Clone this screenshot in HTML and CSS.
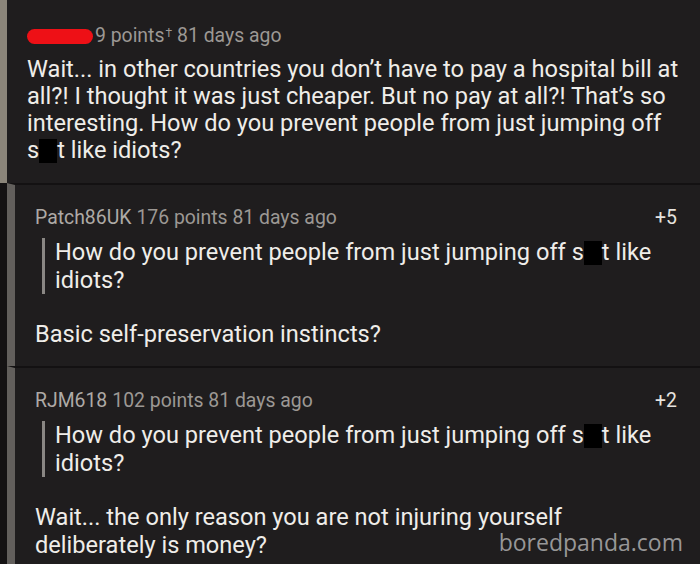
FILE: index.html
```html
<!DOCTYPE html>
<html lang="en">
<head>
  <meta charset="UTF-8" />
  <meta name="viewport" content="width=device-width, initial-scale=1.0" />
  <title>Comments</title>
  <link rel="stylesheet" href="styles.css">
</head>
<body>
  <div class="thread">
    <div class="comment top">
      <div class="meta"><span class="scribble"></span> 9 points<sup>†</sup> 81 days ago</div>
      <p class="body">Wait... in other countries you don’t have to pay a hospital bill at all?! I thought it was just cheaper. But no pay at all?! That’s so interesting. How do you prevent people from just jumping off <span class="word">s<span class="censor"></span>t</span> like idiots?</p>
    </div>

    <div class="replies">
      <div class="comment reply">
        <div class="meta"><span class="user">Patch86UK</span> 176 points 81 days ago <span class="score">+5</span></div>
        <blockquote>How do you prevent people from just jumping off <span class="word">s<span class="censor"></span>t</span> like idiots?</blockquote>
        <p class="body">Basic self-preservation instincts?</p>
      </div>

      <div class="comment reply">
        <div class="meta"><span class="user">RJM618</span> 102 points 81 days ago <span class="score">+2</span></div>
        <blockquote>How do you prevent people from just jumping off <span class="word">s<span class="censor"></span>t</span> like idiots?</blockquote>
        <p class="body">Wait... the only reason you are not injuring yourself deliberately is money?</p>
      </div>
    </div>
  </div>
  <div class="watermark">boredpanda.com</div>
</body>
</html>
```

FILE: styles.css
```css
body {
  margin: 0; overflow: hidden;
  background: #1f1d1e; color: #efede9;
  font-family: Roboto, "Liberation Sans", sans-serif;
}
.thread { width: 700px; }

.comment { background: #1f1d1e; }
.top {
  border-left: 7px solid #8b857a;
  padding: 24px 12px 19px 20px;
}
.meta {
  display: flex; align-items: center; gap: 5px;
  font-size: 19.4px; line-height: 24px; color: #9c9894;
}
.meta sup { font-size: 12px; line-height: 0; margin-left: -4px; position: relative; top: -3px; }
.scribble {
  display: inline-block; width: 66px; height: 15px;
  background: #ee1016; border-radius: 8px;
  margin-right: -3px;
}
.user { color: #aeaaa6; }
.score { margin-left: auto; color: #e6e3df; }

.body {
  margin: 8px 0 0; font-size: 23.6px; line-height: 27px;
}
.word { white-space: nowrap; }
.censor {
  display: inline-block; width: 18px; height: 24px;
  background: #000; vertical-align: -5px;
}

.replies { border-left: 7px solid #141213; }
.reply {
  border-left: 8px solid #625f5c;
  border-top: 2px solid #131112;
  padding: 21px 23px 18px 20px;
}
.reply blockquote {
  margin: 8px 0 0 7px; padding-left: 10px;
  border-left: 3px solid #8a8784;
  font-size: 23.6px; line-height: 28px;
}
.reply .body { margin-top: 26px; line-height: 28px; }

.watermark {
  position: absolute; right: 17px; bottom: 6px;
  font-family: "Open Sans", "DejaVu Sans", sans-serif;
  font-size: 23px; color: rgba(200, 200, 200, 0.72);
}
```
